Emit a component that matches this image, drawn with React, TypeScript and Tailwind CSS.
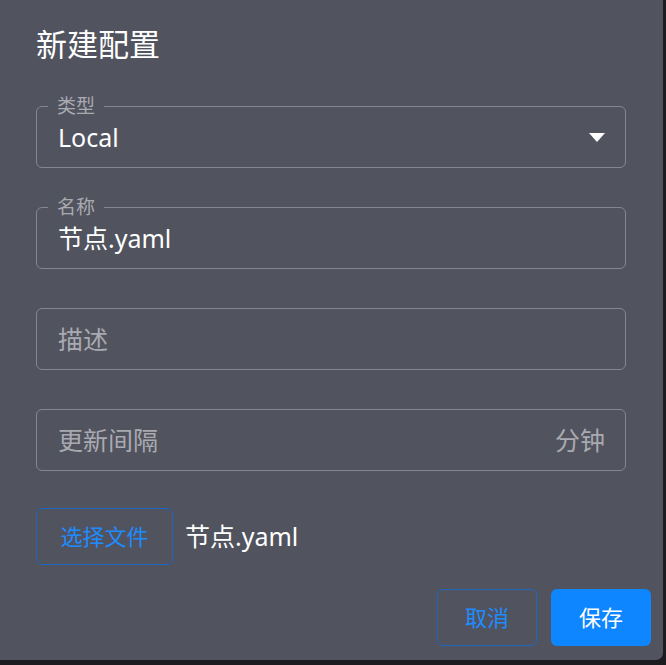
const font = "font-['Noto_Sans','Noto_Sans_CJK_SC',sans-serif]";

function OutlinedField({
  label,
  value,
  placeholder,
  adornment,
  select,
}: {
  label?: string;
  value?: string;
  placeholder?: string;
  adornment?: string;
  select?: boolean;
}) {
  return (
    <div className="relative flex h-[62px] items-center rounded-[6px] border border-[#85868e] pl-[21px] pr-[20px]">
      {label && (
        <span className="absolute left-[11px] top-[-12px] bg-[#51535e] px-[9px] text-[19px] leading-[22px] text-[#a9aab1]">
          {label}
        </span>
      )}
      <span className={`flex-1 text-[25px] leading-[30px] ${value ? "text-white" : "text-[#a9aab1]"}`}>
        {value ?? placeholder}
      </span>
      {adornment && <span className="text-[25px] leading-[30px] text-[#a9aab1]">{adornment}</span>}
      {select && (
        <svg width="16" height="9" viewBox="0 0 16 9">
          <path d="M0 0h16l-8 9z" fill="#ffffff" />
        </svg>
      )}
    </div>
  );
}

export default function App() {
  return (
    <div className={`h-[665px] w-[666px] overflow-hidden bg-[#1b1b20] ${font}`}>
      <div className="flex h-[660px] w-[663px] flex-col rounded-br-[7px] bg-[#51535e] px-[36px] pt-[28px]">
        <h2 className="text-[31px] font-normal leading-[32px] text-white">新建配置</h2>

        <div className="mt-[46px] flex flex-col gap-[39px] pr-[1px]">
          <OutlinedField label="类型" value="Local" select />
          <OutlinedField label="名称" value="节点.yaml" />
          <OutlinedField placeholder="描述" />
          <OutlinedField placeholder="更新间隔" adornment="分钟" />
        </div>

        <div className="mt-[37px] flex items-center gap-[12px]">
          <button className="h-[57px] w-[137px] rounded-[6px] border border-[#1d67bf] text-[22px] text-[#1e8cff]">
            选择文件
          </button>
          <span className="text-[25px] text-white">节点.yaml</span>
        </div>

        <div className="-mr-[24px] mt-auto mb-[14px] flex justify-end gap-[14px]">
          <button className="h-[57px] w-[100px] rounded-[6px] border border-[#1d67bf] text-[22px] text-[#1e8cff]">
            取消
          </button>
          <button className="h-[57px] w-[100px] rounded-[6px] bg-[#0d86ff] text-[22px] text-white">
            保存
          </button>
        </div>
      </div>
    </div>
  );
}
